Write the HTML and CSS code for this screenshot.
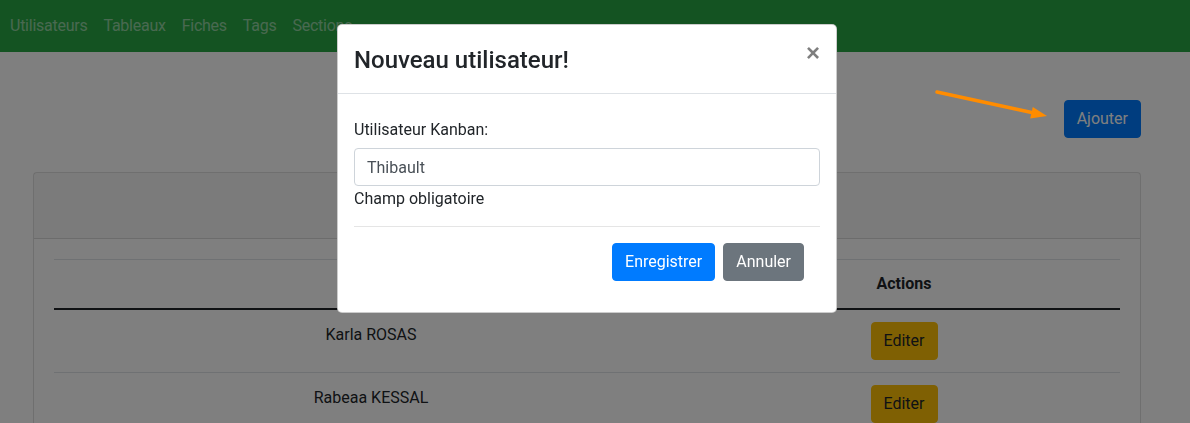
FILE: index.html
```html
<!DOCTYPE html>
<html lang="fr">
<head>
<meta charset="utf-8">
<title>Utilisateurs</title>
<link rel="stylesheet" href="styles.css">
</head>
<body>
<nav class="navbar">
  <a class="nav-link" href="#">Utilisateurs</a>
  <a class="nav-link" href="#">Tableaux</a>
  <a class="nav-link" href="#">Fiches</a>
  <a class="nav-link" href="#">Tags</a>
  <a class="nav-link" href="#">Sections</a>
</nav>
<main class="page">
  <div class="toolbar">
    <button class="btn btn-primary">Ajouter</button>
  </div>
  <section class="card">
    <div class="card-header"></div>
    <div class="card-body">
      <table class="table">
        <thead>
          <tr><th class="col-name">Nom</th><th class="col-actions">Actions</th></tr>
        </thead>
        <tbody>
          <tr><td>Karla ROSAS</td><td><button class="btn btn-warning">Editer</button></td></tr>
          <tr><td>Rabeaa KESSAL</td><td><button class="btn btn-warning">Editer</button></td></tr>
        </tbody>
      </table>
    </div>
  </section>
</main>

<div class="backdrop"></div>

<div class="modal">
  <div class="modal-content">
    <div class="modal-header">
      <h4 class="modal-title">Nouveau utilisateur!</h4>
      <button class="close" aria-label="Close">×</button>
    </div>
    <div class="modal-body">
      <label class="label" for="user">Utilisateur Kanban:</label>
      <input class="input" id="user" type="text" value="Thibault">
      <div class="help">Champ obligatoire</div>
      <hr class="sep">
      <div class="actions">
        <button class="btn btn-primary">Enregistrer</button>
        <button class="btn btn-secondary">Annuler</button>
      </div>
    </div>
  </div>
</div>

<svg class="annotation" width="125" height="40" viewBox="0 0 125 40" aria-hidden="true">
  <line x1="7" y1="7" x2="104" y2="28" stroke="#ff8c00" stroke-width="3.5" stroke-linecap="round"/>
  <polygon points="117,31 100.2,33.5 102.8,22" fill="#ff8c00"/>
</svg>
</body>
</html>
```

FILE: styles.css
```css
* { box-sizing: border-box; }

html, body {
  margin: 0;
  padding: 0;
}

body {
  font-family: Roboto, "Liberation Sans", Arial, sans-serif;
  font-size: 16px;
  line-height: 24px;
  color: #212529;
  background: #fff;
  overflow: hidden;
}

.navbar {
  display: flex;
  align-items: center;
  height: 52px;
  padding: 0 2px;
  background: #28a745;
}

.nav-link {
  display: block;
  padding: 8px;
  color: rgba(255, 255, 255, 0.5);
  text-decoration: none;
  letter-spacing: -0.25px;
}

.page {
  padding: 0 49px 0 33px;
}

.toolbar {
  display: flex;
  justify-content: flex-end;
  margin-top: 48px;
}

.btn {
  display: inline-block;
  font-family: inherit;
  font-size: 16px;
  line-height: 24px;
  padding: 6px 12px;
  border: 1px solid transparent;
  border-radius: 4px;
  cursor: pointer;
}

.btn-primary {
  background: #007bff;
  border-color: #007bff;
  color: #fff;
}

.btn-secondary {
  background: #6c757d;
  border-color: #6c757d;
  color: #fff;
}

.btn-warning {
  background: #ffc107;
  border-color: #ffc107;
  color: #212529;
}

.card {
  margin-top: 34px;
  border: 1px solid rgba(0, 0, 0, 0.125);
  border-radius: 4px;
  background: #fff;
}

.card-header {
  height: 66px;
  background: rgba(0, 0, 0, 0.03);
  border-bottom: 1px solid rgba(0, 0, 0, 0.125);
}

.card-body {
  padding: 20px;
}

.table {
  width: 100%;
  border-collapse: collapse;
  table-layout: fixed;
}

.col-name { width: 634px; }

.table th,
.table td {
  padding: 12px;
  text-align: center;
  vertical-align: top;
  border-top: 1px solid #dee2e6;
}

.table td:first-child {
  padding-top: 13px;
  padding-bottom: 11px;
}

.table th {
  font-weight: 700;
  border-bottom: 2px solid #212529;
}

.backdrop {
  position: fixed;
  inset: 0;
  background: rgba(0, 0, 0, 0.5);
}

.modal {
  position: fixed;
  top: 24px;
  left: 337px;
  width: 500px;
}

.modal-content {
  background: #fff;
  border: 1px solid rgba(0, 0, 0, 0.2);
  border-radius: 5px;
}

.modal-header {
  display: flex;
  align-items: flex-start;
  justify-content: space-between;
  padding: 16px;
  border-bottom: 1px solid #dee2e6;
}

.modal-title {
  margin: 0;
  font-size: 24px;
  line-height: 36px;
  font-weight: 500;
  padding-top: 1px;
  margin-bottom: -1px;
}

.close {
  padding: 16px;
  margin: -16px -16px -16px auto;
  background: transparent;
  border: 0;
  font-family: "Liberation Sans", Arial, sans-serif;
  font-size: 24px;
  font-weight: 700;
  line-height: 1;
  color: #000;
  opacity: 0.5;
}

.modal-body {
  padding: 24px 16px 16px;
}

.label {
  display: block;
  margin-bottom: 6px;
}

.input {
  display: block;
  width: 100%;
  height: 38px;
  padding: 6px 12px;
  font-family: inherit;
  font-size: 16px;
  line-height: 24px;
  color: #495057;
  background: #fff;
  border: 1px solid #ced4da;
  border-radius: 4px;
}

.help {
  line-height: 24px;
  padding-top: 1px;
}

.sep {
  margin: 15px 0 16px;
  border: 0;
  border-top: 1px solid rgba(0, 0, 0, 0.1);
}

.actions {
  display: flex;
  justify-content: flex-end;
  gap: 8px;
  padding-right: 16px;
  margin-bottom: 15px;
}

.annotation {
  position: absolute;
  top: 85px;
  left: 930px;
}
```
